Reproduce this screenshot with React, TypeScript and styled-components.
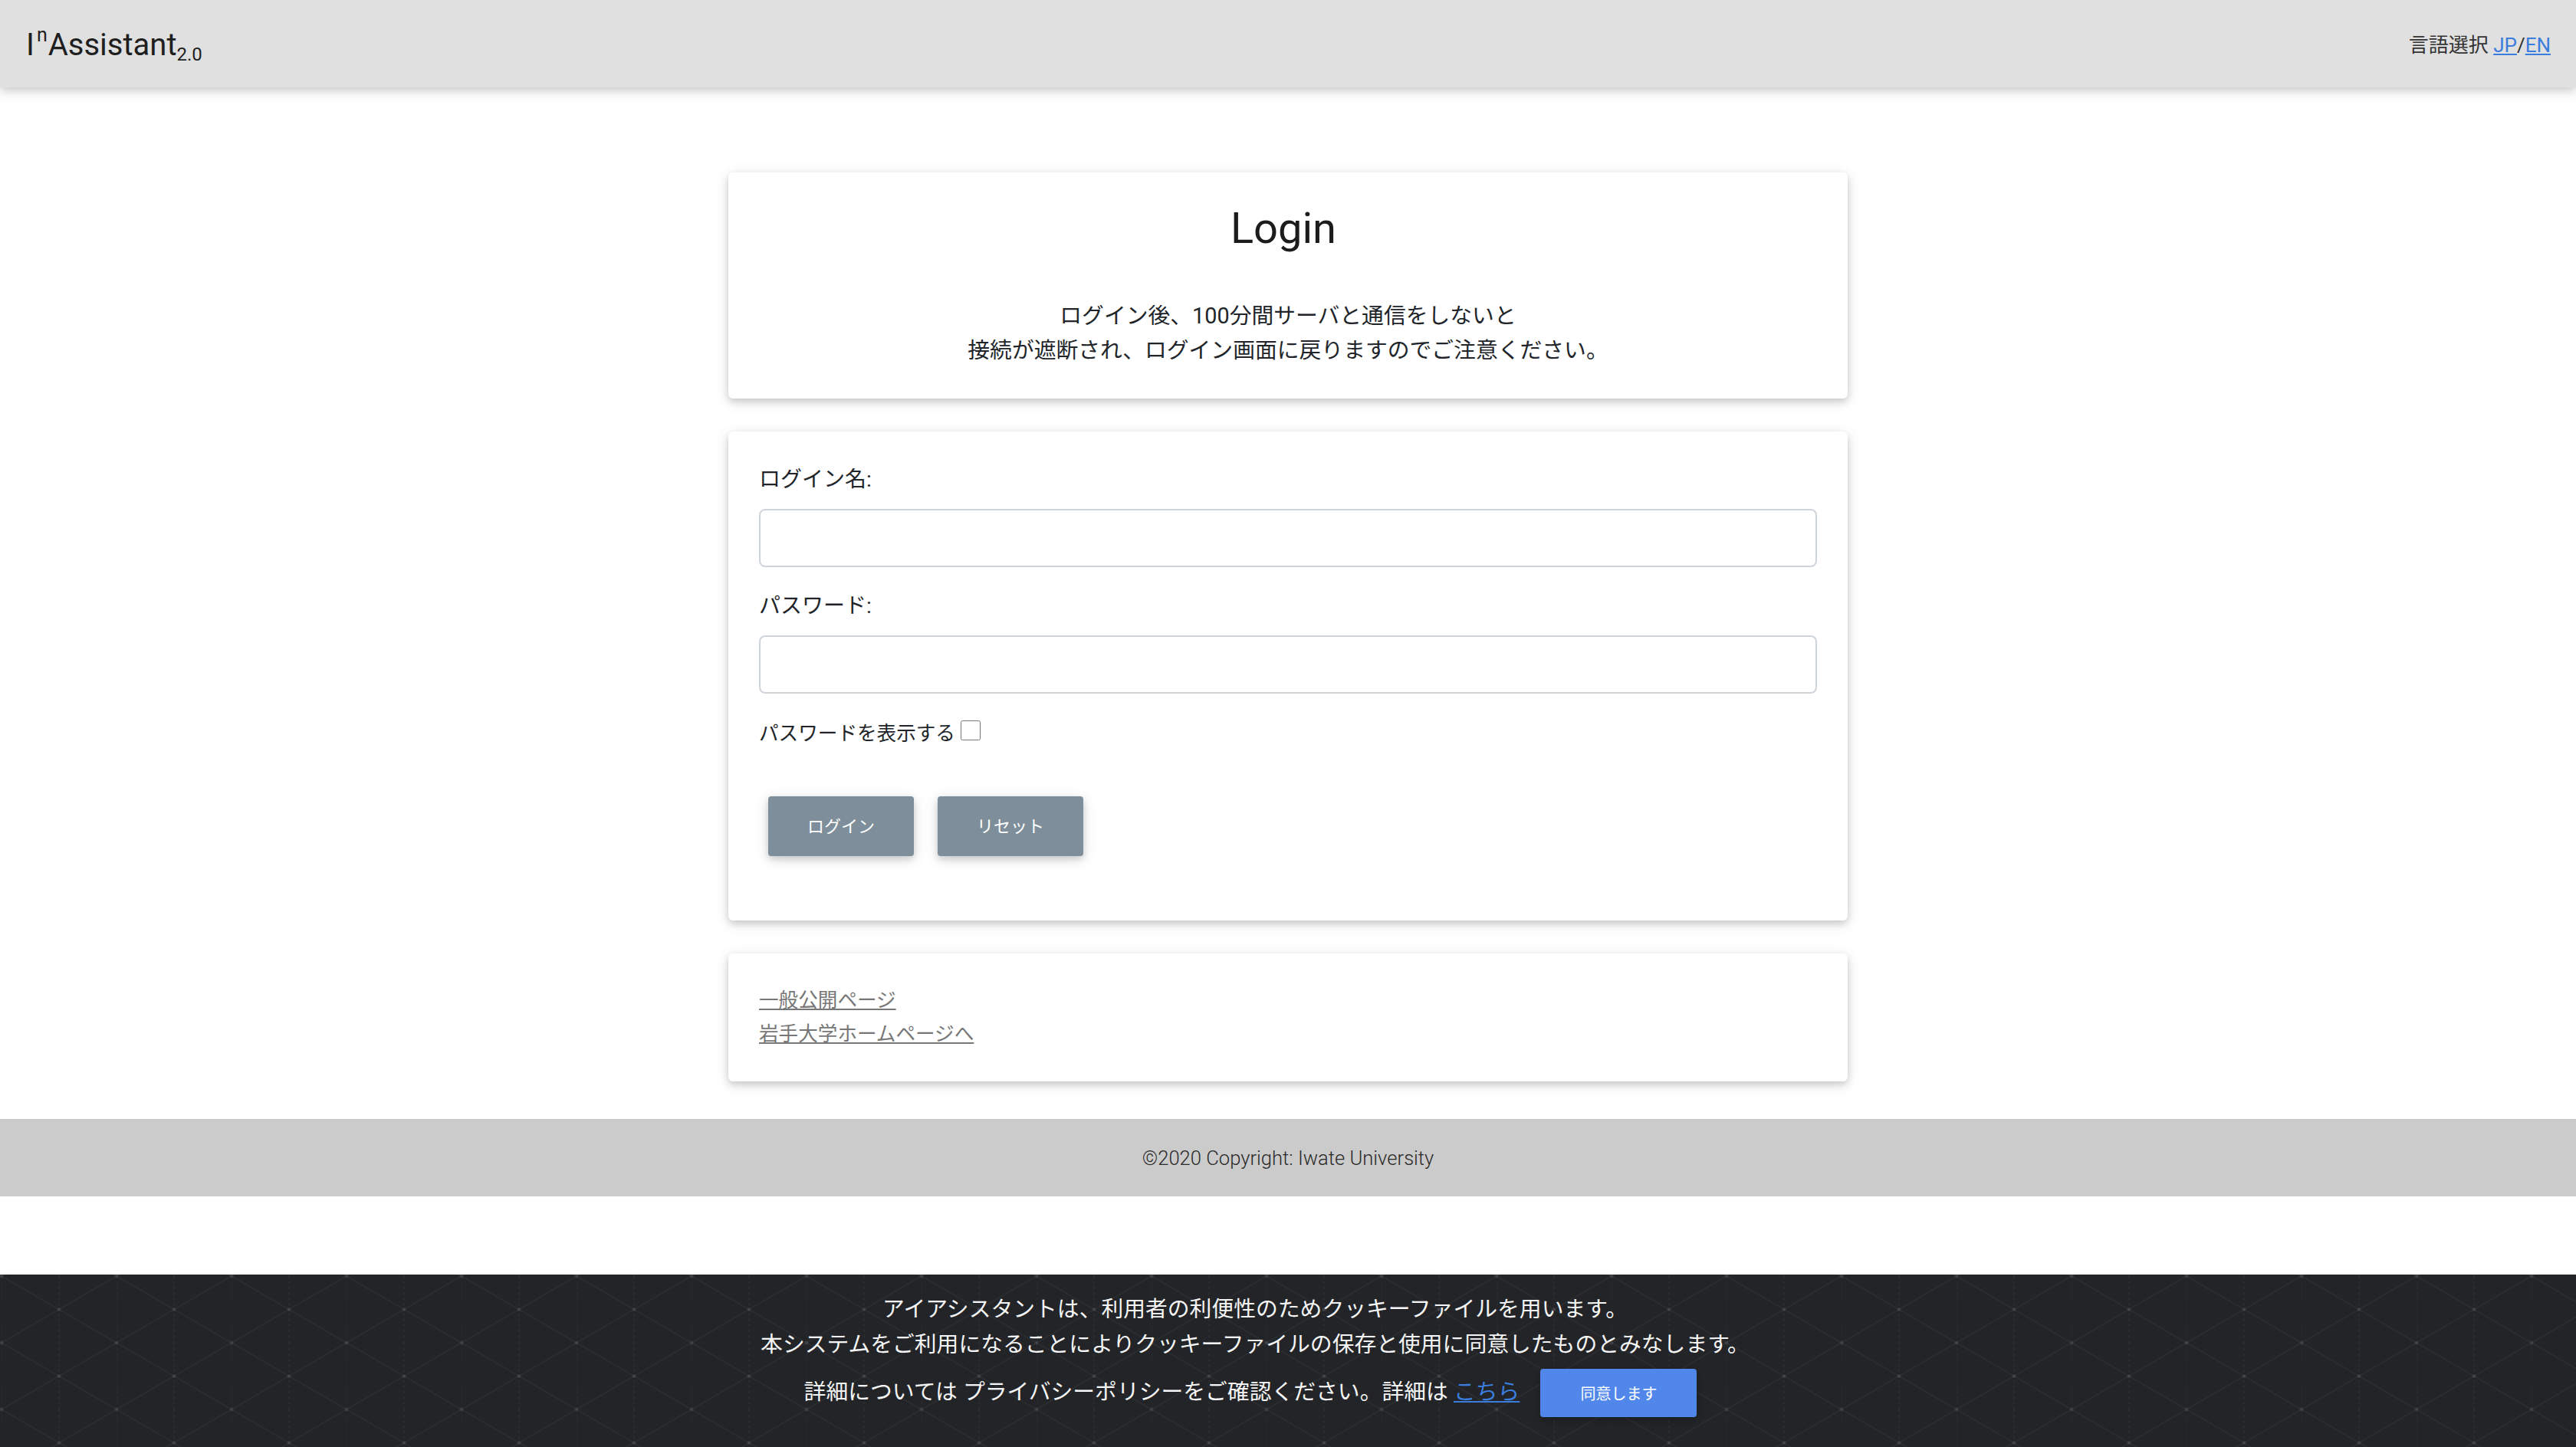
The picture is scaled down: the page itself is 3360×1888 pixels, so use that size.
import React from "react";
import styled, { createGlobalStyle } from "styled-components";

const GlobalStyle = createGlobalStyle`
  html, body { margin: 0; padding: 0; }
  body {
    background: #ffffff;
    font-family: Roboto, "Noto Sans CJK JP", sans-serif;
    color: #212529;
  }
  *, *::before, *::after { box-sizing: border-box; }
`;

const Navbar = styled.header`
  position: relative;
  z-index: 2;
  height: 114px;
  background: #e0e0e0;
  box-shadow: 0 4px 10px rgba(0, 0, 0, 0.14), 0 4px 20px rgba(0, 0, 0, 0.1);
  display: flex;
  align-items: center;
  justify-content: space-between;
  padding: 0 33px 0 34px;
`;

const Brand = styled.a`
  font-size: 40px;
  line-height: 1;
  color: #1f1f1f;
  text-decoration: none;
  padding-top: 2px;
  white-space: nowrap;
`;

const BrandSup = styled.span`
  font-size: 25px;
  vertical-align: 18px;
  margin: 0 1px 0 3px;
`;

const BrandSub = styled.span`
  font-size: 24px;
  vertical-align: -7px;
`;

const LangSwitch = styled.div`
  font-size: 26px;
  color: #333333;
  padding-bottom: 2px;
`;

const LangLink = styled.a`
  color: #3b7ddd;
  text-decoration: underline;
`;

const Main = styled.main`
  width: 1460px;
  margin: 0 auto;
  padding: 111px 0 49px;
  display: flex;
  flex-direction: column;
  gap: 43px;
`;

const Card = styled.section<{ $center?: boolean }>`
  background: #ffffff;
  border-radius: 6px;
  box-shadow: 0 4px 10px rgba(0, 0, 0, 0.16), 0 4px 20px rgba(0, 0, 0, 0.1);
  padding: 40px;
  text-align: ${(p) => (p.$center ? "center" : "left")};
`;

const Title = styled.h1`
  font-size: 56px;
  font-weight: 400;
  line-height: 67px;
  margin: 0 0 58px;
  padding-right: 12px;
  color: #1c1c1c;
`;

const Notice = styled.p`
  font-size: 28.8px;
  line-height: 45px;
  margin: 0;
  color: #212529;
`;

const FormGroup = styled.div`
  margin-bottom: 28px;
`;

const Label = styled.label`
  display: block;
  font-size: 28px;
  line-height: 45px;
  margin-bottom: 16px;
  color: #212529;
`;

const TextInput = styled.input`
  display: block;
  width: 100%;
  height: 76px;
  border: 2px solid #ced4da;
  border-radius: 8px;
  background: #ffffff;
  padding: 0 24px;
  font-size: 28px;
  font-family: inherit;
  outline: none;
`;

const CheckRow = styled.div`
  font-size: 25.6px;
  line-height: 48px;
  color: #212529;
`;

const CheckBox = styled.input`
  width: 26px;
  height: 26px;
  margin: 0 0 0 7px;
  vertical-align: baseline;
`;

const ButtonRow = styled.div`
  display: flex;
  gap: 7px;
  margin: 46px 0 32px;
`;

const GreyButton = styled.button`
  margin: 12px;
  height: 78px;
  padding: 0 51px 5px;
  border: none;
  border-radius: 4px;
  background: #7e8f9b;
  color: #ffffff;
  font-family: inherit;
  font-size: 22px;
  box-shadow: 0 4px 10px rgba(0, 0, 0, 0.16), 0 4px 20px rgba(0, 0, 0, 0.1);
  cursor: pointer;
`;

const LinkLine = styled.div`
  font-size: 25.6px;
  line-height: 43.5px;
`;

const GreyLink = styled.a`
  color: #777777;
  text-decoration: underline;
`;

const Footer = styled.footer`
  height: 101px;
  background: #cbcbcb;
  display: flex;
  align-items: center;
  justify-content: center;
  font-size: 25.6px;
  font-weight: 300;
  color: #2a2a2a;
`;

const CookieBanner = styled.div`
  position: fixed;
  left: 0;
  right: 0;
  bottom: 0;
  height: 225px;
  background: #222428;
  color: #f5f5f5;
  z-index: 10;
  overflow: hidden;
`;

const BannerPattern = styled.svg`
  position: absolute;
  inset: 0;
  width: 100%;
  height: 100%;
`;

const BannerContent = styled.div`
  position: relative;
  padding: 22px 86px 0 0;
  text-align: center;
  font-size: 28.8px;
  line-height: 46px;
`;

const BannerLine = styled.div``;

const BannerActionRow = styled.div`
  display: flex;
  justify-content: center;
  align-items: baseline;
  margin-top: 9px;
`;

const BlueLink = styled.a`
  color: #3b7ddd;
  text-decoration: underline;
`;

const AgreeButton = styled.button`
  margin: 0 12px 0 27px;
  height: 63px;
  padding: 0 52px;
  border: none;
  border-radius: 4px;
  background: #5187ea;
  color: #ffffff;
  font-family: inherit;
  font-size: 20px;
  box-shadow: 0 4px 10px rgba(0, 0, 0, 0.2);
  cursor: pointer;
`;

export default function App() {
  return (
    <>
      <GlobalStyle />
      <Navbar>
        <Brand href="#">
          I<BrandSup>n</BrandSup>Assistant<BrandSub>2.0</BrandSub>
        </Brand>
        <LangSwitch>
          言語選択 <LangLink href="#">JP</LangLink>/<LangLink href="#">EN</LangLink>
        </LangSwitch>
      </Navbar>

      <Main>
        <Card $center>
          <Title>Login</Title>
          <Notice>
            ログイン後、100分間サーバと通信をしないと
            <br />
            接続が遮断され、ログイン画面に戻りますのでご注意ください。
          </Notice>
        </Card>

        <Card>
          <FormGroup>
            <Label htmlFor="login-name">ログイン名:</Label>
            <TextInput id="login-name" type="text" />
          </FormGroup>
          <FormGroup>
            <Label htmlFor="login-pass">パスワード:</Label>
            <TextInput id="login-pass" type="password" />
          </FormGroup>
          <CheckRow>
            パスワードを表示する
            <CheckBox type="checkbox" />
          </CheckRow>
          <ButtonRow>
            <GreyButton type="button">ログイン</GreyButton>
            <GreyButton type="button">リセット</GreyButton>
          </ButtonRow>
        </Card>

        <Card>
          <LinkLine>
            <GreyLink href="#">一般公開ページ</GreyLink>
          </LinkLine>
          <LinkLine>
            <GreyLink href="#">岩手大学ホームページへ</GreyLink>
          </LinkLine>
        </Card>
      </Main>

      <Footer>©2020 Copyright: Iwate University</Footer>

      <CookieBanner>
        <BannerPattern aria-hidden="true">
          <defs>
            <pattern id="lattice" x="2" y="2" width="150" height="87" patternUnits="userSpaceOnUse">
              <g stroke="rgba(255,255,255,0.045)" strokeWidth="1.5" fill="none">
                <line x1="0" y1="0" x2="150" y2="87" />
                <line x1="150" y1="0" x2="0" y2="87" />
                <line x1="0" y1="0" x2="0" y2="87" strokeDasharray="3 4" />
                <line x1="75" y1="0" x2="75" y2="87" strokeDasharray="3 4" />
              </g>
              <g fill="rgba(255,255,255,0.08)">
                <circle cx="0" cy="0" r="2.5" />
                <circle cx="150" cy="0" r="2.5" />
                <circle cx="75" cy="43.5" r="2.5" />
                <circle cx="0" cy="87" r="2.5" />
                <circle cx="150" cy="87" r="2.5" />
              </g>
            </pattern>
          </defs>
          <rect width="100%" height="100%" fill="url(#lattice)" />
        </BannerPattern>
        <BannerContent>
          <BannerLine>アイアシスタントは、利用者の利便性のためクッキーファイルを用います。</BannerLine>
          <BannerLine>本システムをご利用になることによりクッキーファイルの保存と使用に同意したものとみなします。</BannerLine>
          <BannerActionRow>
            <span>
              詳細については プライバシーポリシーをご確認ください。詳細は <BlueLink href="#">こちら</BlueLink>
            </span>
            <AgreeButton type="button">同意します</AgreeButton>
          </BannerActionRow>
        </BannerContent>
      </CookieBanner>
    </>
  );
}
